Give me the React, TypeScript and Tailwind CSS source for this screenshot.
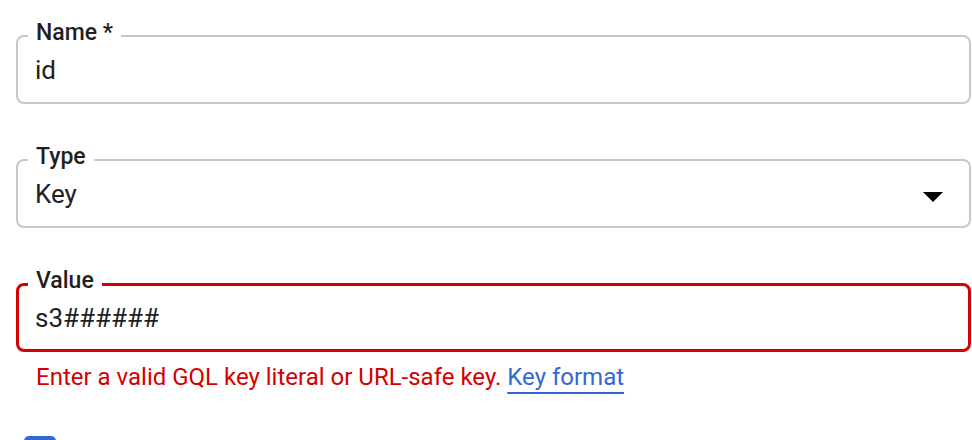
const Field = ({
  label,
  value,
  error,
  select,
}: {
  label: string;
  value: string;
  error?: boolean;
  select?: boolean;
}) => (
  <div
    className={`relative flex h-[69px] items-start justify-between rounded-lg ${
      error ? "border-[3px] border-[#d50000] pl-[16px] pt-[17px]" : "border-2 border-[#c8c8c8] pl-[17px] pt-[18px]"
    } pr-[26px]`}
  >
    <span
      className={`absolute ${
        error ? "left-[9px] top-[-17px]" : "left-[10px] top-[-16px]"
      } bg-white px-2 text-[23px] font-medium leading-6 text-[#1f1f1f]`}
    >
      {label}
    </span>
    <span className="text-[26px] leading-[30px] text-[#202124]">{value}</span>
    {select && (
      <svg width="20" height="10" viewBox="0 0 20 10" className="mt-[13px]">
        <path d="M0 0 L20 0 L10 10 Z" fill="#000" />
      </svg>
    )}
  </div>
);

export default function App() {
  return (
    <div className="h-[440px] overflow-hidden bg-white pl-4 pr-px pt-[35px] font-['Roboto',sans-serif]">
      <div className="flex flex-col gap-[55px]">
        <Field label="Name *" value="id" />
        <Field label="Type" value="Key" select />
        <Field label="Value" value="s3######" error />
      </div>
      <p className="mt-[11px] pl-5 text-[24px] leading-7 text-[#d50000]">
        Enter a valid GQL key literal or URL-safe key.{" "}
        <a className="text-[#3367d6] underline decoration-2 underline-offset-[7px]" href="#">
          Key format
        </a>
      </p>
      <div className="mt-[45px] ml-2 h-8 w-8 rounded-[5px] bg-[#3367d6]" />
    </div>
  );
}
